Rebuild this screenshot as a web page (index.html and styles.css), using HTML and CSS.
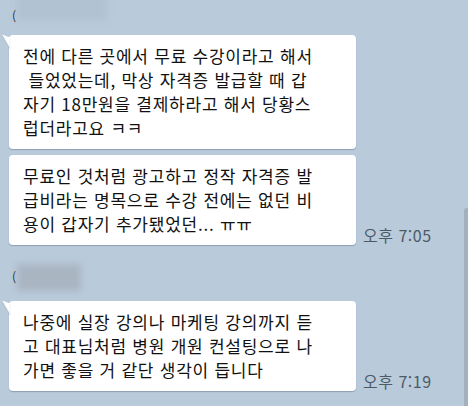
FILE: index.html
```html
<!DOCTYPE html>
<html lang="ko">
<head>
<meta charset="utf-8">
<link rel="stylesheet" href="styles.css">
</head>
<body>
<div class="chat">
  <div class="sender sender-top">
    <span class="paren">(</span>
    <span class="name-blur wide"></span>
  </div>
  <div class="row">
    <div class="bubble tail">전에 다른 곳에서 무료 수강이라고 해서<br> 들었었는데, 막상 자격증 발급할 때 갑<br>자기 18만원을 결제하라고 해서 당황스<br>럽더라고요 ㅋㅋ</div>
  </div>
  <div class="row">
    <div class="bubble">무료인 것처럼 광고하고 정작 자격증 발<br>급비라는 명목으로 수강 전에는 없던 비<br>용이 갑자기 추가됐었던... ㅠㅠ</div>
    <span class="time">오후 7:05</span>
  </div>
  <div class="sender sender-mid">
    <span class="paren">(</span>
    <span class="name-blur"></span>
  </div>
  <div class="row">
    <div class="bubble tail">나중에 실장 강의나 마케팅 강의까지 듣<br>고 대표님처럼 병원 개원 컨설팅으로 나<br>가면 좋을 거 같단 생각이 듭니다</div>
    <span class="time">오후 7:19</span>
  </div>
</div>
<div class="scrollbar"></div>
</body>
</html>
```
FILE: styles.css
```css
html, body {
  margin: 0;
  height: 100%;
}

body {
  background: #b9cadb;
  font-family: "Noto Sans CJK KR", "Noto Sans", sans-serif;
  color: #111;
  overflow: hidden;
  position: relative;
}

.chat {
  display: flex;
  flex-direction: column;
  padding-left: 9px;
}

.sender {
  position: relative;
  display: flex;
  align-items: center;
}

.sender-top {
  height: 35px;
  align-items: flex-start;
}

.sender-mid {
  height: 50px;
}

.paren {
  font-size: 12px;
  color: #333;
  margin-left: 3px;
  position: relative;
  z-index: 1;
}

.sender-top .paren {
  margin-top: 7px;
}

.name-blur {
  position: absolute;
  left: 8px;
  top: 13px;
  width: 64px;
  height: 27px;
  background: #aab5c2;
  filter: blur(3px);
}

.name-blur.wide {
  top: -6px;
  width: 90px;
  height: 26px;
  background: #b1c2d3;
}

.row {
  display: flex;
  align-items: flex-end;
  gap: 7px;
  margin-bottom: 6px;
}

.bubble {
  position: relative;
  width: 347px;
  box-sizing: border-box;
  background: #fff;
  border-radius: 4px;
  box-shadow: 0 1px 1px rgba(60, 80, 100, 0.35);
  padding: 9px 0 9px 14px;
  font-size: 17px;
  line-height: 24px;
  letter-spacing: 0.75px;
  white-space: pre;
}

.bubble.tail::before {
  content: "";
  position: absolute;
  left: -7px;
  top: 1px;
  border-style: solid;
  border-width: 0 8px 11px 0;
  border-color: transparent #fff transparent transparent;
  transform: skewY(20deg);
  filter: drop-shadow(0 1px 0 rgba(60, 80, 100, 0.3));
}

.time {
  font-size: 16px;
  letter-spacing: 0.5px;
  color: #4d5a66;
  line-height: 20px;
}

.scrollbar {
  position: absolute;
  right: 0;
  top: 208px;
  width: 4px;
  bottom: -4px;
  background: #a3b1bf;
  border-radius: 3px 0 0 0;
}
```
